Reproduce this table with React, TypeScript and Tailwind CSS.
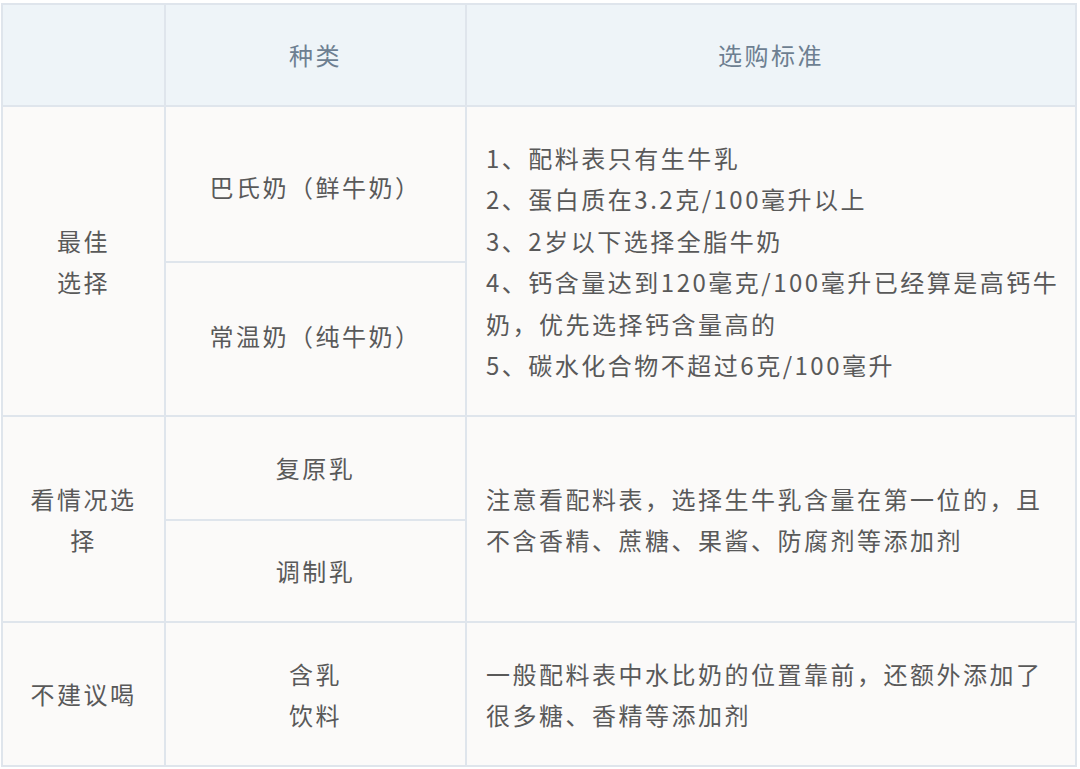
const cell = 'border-2 border-[#dfe5ec] text-center align-middle'

export default function App() {
  return (
    <div
      className="min-h-screen bg-white pl-[1px] pt-[3px] text-[24px] tracking-[2.5px] text-[#595959]"
      style={{ fontFamily: '"Noto Sans CJK SC", "Noto Sans", sans-serif' }}
    >
      <table className="w-[1076px] table-fixed border-collapse bg-[#fbfaf9]">
        <colgroup>
          <col className="w-[163px]" />
          <col className="w-[301px]" />
          <col />
        </colgroup>
        <tbody>
          {/* header */}
          <tr className="h-[102px] bg-[#eef4f8] text-[#6d7f91]">
            <td className={cell}></td>
            <td className={cell}>种类</td>
            <td className={cell}>选购标准</td>
          </tr>

          {/* 最佳选择 */}
          <tr className="h-[156px]">
            <td className={cell} rowSpan={2}>
              <div className="leading-[41.5px]">
                最佳
                <br />
                选择
              </div>
            </td>
            <td className={`${cell} pt-[6px]`}>巴氏奶（鲜牛奶）</td>
            <td className="border-2 border-[#dfe5ec] pl-[19px] text-left align-middle" rowSpan={2}>
              <div className="whitespace-nowrap leading-[41.5px]">
                1、配料表只有生牛乳
                <br />
                2、蛋白质在3.2克/100毫升以上
                <br />
                3、2岁以下选择全脂牛奶
                <br />
                4、钙含量达到120毫克/100毫升已经算是高钙牛
                <br />
                奶，优先选择钙含量高的
                <br />
                5、碳水化合物不超过6克/100毫升
              </div>
            </td>
          </tr>
          <tr className="h-[154px]">
            <td className={`${cell} pb-[6px]`}>常温奶（纯牛奶）</td>
          </tr>

          {/* 看情况选择 */}
          <tr className="h-[104px]">
            <td className={cell} rowSpan={2}>
              <div className="leading-[41.5px]">
                看情况选
                <br />
                择
              </div>
            </td>
            <td className={cell}>复原乳</td>
            <td className="border-2 border-[#dfe5ec] pl-[19px] text-left align-middle" rowSpan={2}>
              <div className="whitespace-nowrap leading-[41.5px]">
                注意看配料表，选择生牛乳含量在第一位的，且
                <br />
                不含香精、蔗糖、果酱、防腐剂等添加剂
              </div>
            </td>
          </tr>
          <tr className="h-[102px]">
            <td className={cell}>调制乳</td>
          </tr>

          {/* 不建议喝 */}
          <tr className="h-[144px]">
            <td className={cell}>不建议喝</td>
            <td className={cell}>
              <div className="leading-[41.5px]">
                含乳
                <br />
                饮料
              </div>
            </td>
            <td className="border-2 border-[#dfe5ec] pl-[19px] text-left align-middle">
              <div className="whitespace-nowrap leading-[41.5px]">
                一般配料表中水比奶的位置靠前，还额外添加了
                <br />
                很多糖、香精等添加剂
              </div>
            </td>
          </tr>
        </tbody>
      </table>
    </div>
  )
}
